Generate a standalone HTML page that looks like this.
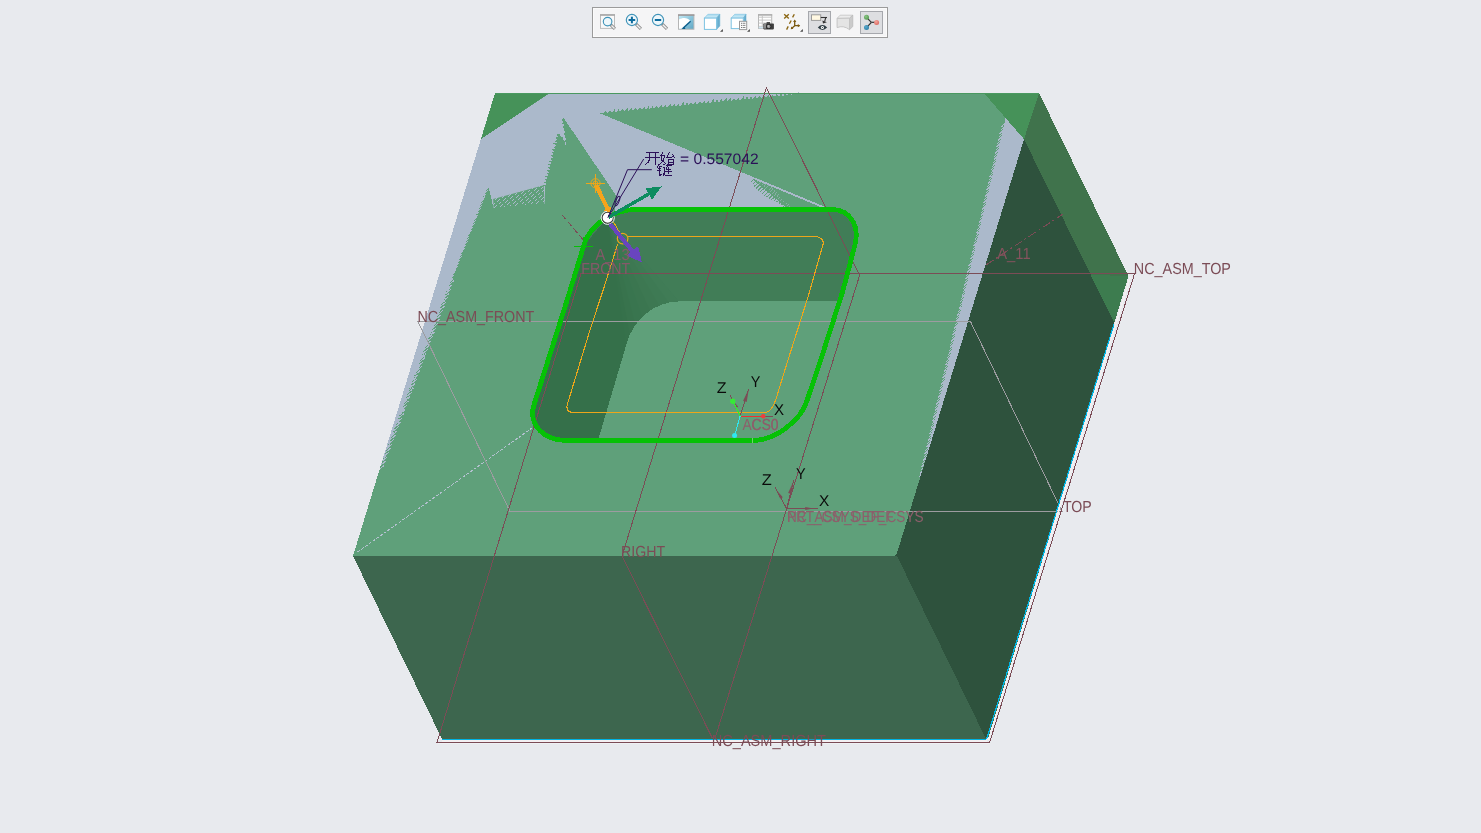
<!DOCTYPE html>
<html><head><meta charset="utf-8"><title>view</title>
<style>
html,body{margin:0;padding:0;}
body{width:1481px;height:833px;overflow:hidden;background:#e8eaee;position:relative;font-family:"Liberation Sans",sans-serif;}
.t{position:absolute;white-space:nowrap;line-height:1;will-change:transform;font-family:"Liberation Sans",sans-serif;}
#tb{position:absolute;left:592px;top:7px;width:294px;height:29px;border:1px solid #9b9b9b;background:#f4f4f5;}
.tog{position:absolute;top:3px;width:22px;height:22px;background:#d9dadc;border:1px solid #b4b5b8;box-sizing:border-box;}
</style></head><body>
<svg width="1481" height="833" viewBox="0 0 1481 833" style="position:absolute;left:0;top:0" shape-rendering="crispEdges">
<polygon points="495.0,93.0 1039.0,93.0 897.0,556.0 353.0,556.0" fill="#5fa07a"/>
<clipPath id="tf"><polygon points="495.0,93.0 1039.0,93.0 897.0,556.0 353.0,556.0"/></clipPath>
<polygon points="481.2,138.8 547.5,94.5 800.0,94.0 799.4,94.1 798.6,91.7 796.4,94.4 795.1,94.5 794.1,92.4 792.1,94.8 790.8,94.9 790.4,92.1 787.8,95.2 786.5,95.3 785.4,93.3 783.5,95.6 782.2,95.7 781.7,93.1 779.2,96.0 777.9,96.1 777.2,93.7 774.9,96.4 773.7,96.5 772.6,94.6 770.7,96.8 769.4,97.0 768.9,94.3 766.4,97.2 765.1,97.4 764.0,95.4 762.1,97.7 760.8,97.8 760.2,95.3 757.8,98.1 756.5,98.2 755.5,96.2 753.5,98.5 752.2,98.6 751.2,96.6 749.3,98.9 748.0,99.0 747.3,96.5 745.0,99.3 743.7,99.4 743.6,96.3 740.7,99.7 739.4,99.8 738.4,97.8 736.4,100.1 735.1,100.3 734.2,98.0 732.1,100.5 730.8,100.7 730.5,97.9 727.8,101.0 726.6,101.1 726.6,97.8 723.6,101.4 722.3,101.5 721.8,98.8 719.3,101.8 718.0,101.9 717.3,99.4 715.0,102.2 713.7,102.3 713.8,99.0 710.7,102.6 709.4,102.7 708.3,100.8 706.4,103.0 705.1,103.1 705.0,100.0 702.1,103.4 700.9,103.6 700.1,101.3 697.9,103.9 696.6,104.0 695.6,101.9 693.6,104.3 692.3,104.4 691.3,102.3 689.3,104.7 688.0,104.8 687.2,102.5 685.0,105.1 683.7,105.2 683.6,102.1 680.7,105.5 679.4,105.6 678.5,103.5 676.4,105.9 675.2,106.0 674.7,103.3 672.2,106.3 670.9,106.5 670.5,103.6 667.9,106.7 666.6,106.9 665.9,104.4 663.6,107.2 662.3,107.3 661.8,104.6 659.3,107.6 658.0,107.7 657.0,105.7 655.0,108.0 653.7,108.1 652.7,106.1 650.8,108.4 649.5,108.5 648.6,106.3 646.5,108.8 645.2,108.9 644.9,106.1 642.2,109.2 640.9,109.3 640.3,106.8 637.9,109.6 636.6,109.8 635.9,107.4 633.6,110.0 632.3,110.2 631.9,107.4 629.3,110.5 628.1,110.6 627.5,108.0 625.1,110.9 623.8,111.0 623.0,108.7 620.8,111.3 619.5,111.4 619.3,108.4 616.5,111.7 615.2,111.8 614.9,108.9 612.2,112.1 610.9,112.2 610.1,110.0 607.9,112.5 606.6,112.6 606.2,109.9 603.6,112.9 603.0,113.0 599.6,113.2 825.5,207.0 632.0,207.2 614.0,214.0 617.5,197.5 562.5,116.2 563.1,118.5 561.8,120.5 563.4,121.0 563.6,122.0 561.9,123.9 563.9,124.5 564.1,125.5 562.6,127.4 564.4,128.0 564.6,129.0 563.6,131.1 564.9,131.5 565.1,132.5 563.3,134.3 565.4,135.0 565.6,136.0 564.8,138.1 565.9,138.5 566.1,139.5 564.9,141.5 566.4,142.0 566.6,143.0 565.0,144.9 566.9,145.5 567.0,146.0 565.0,143.0 564.7,142.5 564.4,139.8 563.2,140.4 562.6,139.5 562.7,136.6 561.2,137.3 560.6,136.4 560.1,133.8 559.1,134.3 558.8,133.8 558.7,134.2 555.7,134.8 558.1,136.3 557.9,137.2 554.8,137.7 557.4,139.3 557.2,140.2 554.3,140.8 556.6,142.2 556.4,143.1 553.1,143.5 555.8,145.2 555.6,146.1 553.2,147.0 555.1,148.1 554.9,149.0 551.8,149.6 554.3,151.1 554.1,152.0 551.2,152.6 553.5,154.0 553.3,154.9 550.5,155.6 552.8,157.0 552.6,157.9 549.9,158.7 552.0,160.0 551.8,160.8 548.5,161.3 551.2,162.9 551.0,163.8 547.6,164.1 550.5,165.9 550.3,166.8 547.6,167.5 549.7,168.8 549.5,169.7 546.5,170.3 548.9,171.8 548.7,172.7 546.7,173.8 548.2,174.7 548.0,175.6 544.9,176.2 547.4,177.7 547.2,178.6 544.2,179.2 546.6,180.6 546.4,181.5 542.9,181.8 545.9,183.6 545.7,184.5 542.4,184.9 545.1,186.6 545.0,187.0 544.5,204.8 495.0,209.7 493.5,208.0 488.8,187.5 488.6,188.0 485.6,191.1 487.8,190.1 487.4,191.0 484.2,194.2 486.6,193.1 486.2,194.0 482.5,197.4 485.4,196.1 485.1,197.0 482.5,199.9 484.2,199.1 483.9,200.0 480.5,203.3 483.0,202.1 482.7,203.0 479.9,206.0 481.9,205.1 481.5,206.0 478.8,209.0 480.7,208.2 480.3,209.1 477.7,212.0 479.5,211.2 479.1,212.1 475.2,215.6 478.3,214.2 477.9,215.1 475.2,218.1 477.1,217.2 476.8,218.1 473.8,221.2 475.9,220.2 475.6,221.1 472.3,224.3 474.7,223.2 474.4,224.1 470.3,227.7 473.5,226.3 473.2,227.2 470.5,230.1 472.4,229.3 472.0,230.2 468.7,233.4 471.2,232.3 470.8,233.2 467.3,236.5 470.0,235.3 469.6,236.2 465.5,239.8 468.8,238.3 468.4,239.2 464.4,242.8 467.6,241.3 467.3,242.2 463.2,245.8 466.4,244.4 466.1,245.3 463.0,248.4 465.2,247.4 464.9,248.3 461.6,251.5 464.0,250.4 463.7,251.3 460.5,254.5 462.9,253.4 462.5,254.3 458.4,257.9 461.7,256.4 461.3,257.3 457.1,261.0 460.5,259.4 460.1,260.3 457.3,263.3 459.3,262.5 458.9,263.4 456.1,266.4 458.1,265.5 457.8,266.4 454.8,269.4 456.9,268.5 456.6,269.4 453.6,272.5 455.7,271.5 455.4,272.4 452.0,275.7 454.6,274.5 454.2,275.4 450.6,278.8 453.4,277.5 453.0,278.4 450.0,281.5 452.2,280.5 452.0,281.0 450.3,280.4 454.3,278.6 449.9,282.2 449.1,283.5 453.1,281.7 448.7,285.3 448.0,286.6 452.0,284.8 447.6,288.4 446.8,289.7 450.8,287.9 446.4,291.5 445.6,292.8 449.6,291.0 445.2,294.6 444.5,295.9 448.5,294.1 444.1,297.7 443.3,299.0 447.3,297.2 442.9,300.8 442.1,302.1 446.1,300.3 441.7,303.9 440.9,305.2 444.9,303.4 440.5,307.0 439.8,308.3 443.8,306.5 439.4,310.1 438.6,311.4 442.6,309.6 438.2,313.2 437.4,314.5 441.4,312.7 437.0,316.3 436.2,317.6 440.2,315.8 435.8,319.4 435.1,320.7 439.1,318.9 434.7,322.5 433.9,323.8 437.9,322.0 433.5,325.6 432.7,326.9 436.7,325.1 432.3,328.7 431.5,330.0 435.5,328.2 431.1,331.8 430.4,333.1 434.4,331.3 430.0,334.9 429.2,336.2 433.2,334.4 428.8,338.0 428.0,339.3 432.0,337.5 427.6,341.1 426.8,342.4 430.8,340.6 426.4,344.2 425.7,345.5 429.7,343.7 425.3,347.3 424.5,348.6 428.5,346.8 424.1,350.4 423.3,351.7 427.3,349.9 422.9,353.5 422.2,354.8 426.2,353.0 421.8,356.6 421.0,357.9 425.0,356.1 420.6,359.7 419.8,361.0 423.8,359.2 419.4,362.8 418.6,364.1 422.6,362.3 418.2,365.9 417.5,367.2 421.5,365.4 417.1,369.0 416.3,370.3 420.3,368.5 415.9,372.1 415.1,373.4 419.1,371.6 414.7,375.2 413.9,376.5 417.9,374.7 413.5,378.3 412.8,379.6 416.8,377.8 412.4,381.4 411.6,382.7 415.6,380.9 411.2,384.5 410.4,385.8 414.4,384.0 410.0,387.6 409.2,388.9 413.2,387.1 408.8,390.7 408.1,392.0 412.1,390.2 407.7,393.8 406.9,395.1 410.9,393.3 406.5,396.9 405.7,398.2 409.7,396.4 405.3,400.0 404.5,401.3 408.5,399.5 404.1,403.1 403.4,404.4 407.4,402.6 403.0,406.2 402.2,407.5 406.2,405.7 401.8,409.3 401.0,410.6 405.0,408.8 400.6,412.4 399.9,413.7 403.9,411.9 399.5,415.5 398.7,416.8 402.7,415.0 398.3,418.6 397.5,419.9 401.5,418.1 397.1,421.7 396.3,423.0 400.3,421.2 395.9,424.8 395.2,426.1 399.2,424.3 394.8,427.9 394.0,429.2 398.0,427.4 393.6,431.0 392.8,432.3 396.8,430.5 392.4,434.1 391.6,435.4 395.6,433.6 391.2,437.2 390.5,438.5 394.5,436.7 390.1,440.3 389.3,441.6 393.3,439.8 388.9,443.4 388.1,444.7 392.1,442.9 387.7,446.5 386.9,447.8 390.9,446.0 386.5,449.6 385.8,450.9 389.8,449.1 385.4,452.7 384.6,454.0 388.6,452.2 384.2,455.8 383.4,457.1 387.4,455.3 383.0,458.9 382.2,460.2 386.2,458.4 381.8,462.0 381.1,463.3 385.1,461.5 380.7,465.1 377.1,468.0 478.0,138.8" fill="#abb9cb"/>
<clipPath id="hb"><polygon points="493.2,199.0 543.7,185.3 544.6,204.9 495.0,209.8 493.5,208.0"/></clipPath>
<g clip-path="url(#hb)" stroke="#5fa07a" stroke-width="2.4">
<line x1="470.0" y1="214" x2="508.0" y2="184"/>
<line x1="474.6" y1="214" x2="512.6" y2="184"/>
<line x1="479.2" y1="214" x2="517.2" y2="184"/>
<line x1="483.8" y1="214" x2="521.8" y2="184"/>
<line x1="488.4" y1="214" x2="526.4" y2="184"/>
<line x1="493.0" y1="214" x2="531.0" y2="184"/>
<line x1="497.6" y1="214" x2="535.6" y2="184"/>
<line x1="502.2" y1="214" x2="540.2" y2="184"/>
<line x1="506.8" y1="214" x2="544.8" y2="184"/>
<line x1="511.4" y1="214" x2="549.4" y2="184"/>
<line x1="516.0" y1="214" x2="554.0" y2="184"/>
<line x1="520.6" y1="214" x2="558.6" y2="184"/>
<line x1="525.2" y1="214" x2="563.2" y2="184"/>
<line x1="529.8" y1="214" x2="567.8" y2="184"/>
<line x1="534.4" y1="214" x2="572.4" y2="184"/>
<line x1="539.0" y1="214" x2="577.0" y2="184"/>
<line x1="543.6" y1="214" x2="581.6" y2="184"/>
<line x1="548.2" y1="214" x2="586.2" y2="184"/>
<line x1="552.8" y1="214" x2="590.8" y2="184"/>
<line x1="557.4" y1="214" x2="595.4" y2="184"/>
</g>
<polygon points="493.5,208.0 495.0,209.8 544.6,204.9 544.3,203.0 497.0,207.5" fill="#5fa07a"/>
<polygon points="1005.3,118.0 1027.0,139.2 923.7,478.0 920.1,477.4 921.4,475.4 921.4,473.8 921.1,474.1 922.4,472.1 922.4,470.5 922.2,470.8 923.5,468.8 923.5,467.2 923.1,467.5 924.4,465.5 924.4,463.9 923.8,464.2 925.1,462.2 925.1,460.6 924.6,460.9 925.9,458.9 925.9,457.3 925.4,457.6 926.7,455.6 926.7,454.0 926.2,454.3 927.5,452.3 927.5,450.7 926.9,451.0 928.2,449.0 928.2,447.4 927.7,447.7 929.0,445.7 929.0,444.1 928.5,444.4 929.8,442.4 929.8,440.8 929.3,441.1 930.6,439.1 930.6,437.5 930.0,437.8 931.3,435.8 931.3,434.2 930.8,434.5 932.1,432.5 932.1,430.9 931.6,431.2 932.9,429.2 932.9,427.6 932.4,427.9 933.7,425.9 933.7,424.3 933.1,424.6 934.4,422.6 934.4,421.0 933.9,421.3 935.2,419.3 935.2,417.7 934.7,418.0 936.0,416.0 936.0,414.4 935.5,414.7 936.8,412.7 936.8,411.1 936.2,411.4 937.5,409.4 937.5,407.8 937.0,408.1 938.3,406.1 938.3,404.5 937.8,404.8 939.1,402.8 939.1,401.2 938.5,401.5 939.8,399.5 939.8,397.9 939.3,398.2 940.6,396.2 940.6,394.6 940.1,394.9 941.4,392.9 941.4,391.3 940.9,391.6 942.2,389.6 942.2,388.0 941.6,388.3 942.9,386.3 942.9,384.7 942.4,385.0 943.7,383.0 943.7,381.4 943.2,381.7 944.5,379.7 944.5,378.1 944.0,378.4 945.3,376.4 945.3,374.8 944.7,375.1 946.0,373.1 946.0,371.5 945.5,371.8 946.8,369.8 946.8,368.2 946.3,368.5 947.6,366.5 947.6,364.9 947.1,365.2 948.4,363.2 948.4,361.6 947.8,361.9 949.1,359.9 949.1,358.3 948.6,358.6 949.9,356.6 949.9,355.0 949.4,355.3 950.7,353.3 950.7,351.7 950.2,352.0 951.5,350.0 951.5,348.4 950.9,348.7 952.2,346.7 952.2,345.1 951.7,345.4 953.0,343.4 953.0,341.8 952.5,342.1 953.8,340.1 953.8,338.5 953.3,338.8 954.6,336.8 954.6,335.2 954.0,335.5 955.3,333.5 955.3,331.9 954.8,332.2 956.1,330.2 956.1,328.6 955.6,328.9 956.9,326.9 956.9,325.3 956.3,325.6 957.6,323.6 957.6,322.0 957.1,322.3 958.4,320.3 958.4,318.7 957.9,319.0 959.2,317.0 959.2,315.4 958.7,315.7 960.0,313.7 960.0,312.1 959.4,312.4 960.7,310.4 960.7,308.8 960.2,309.1 961.5,307.1 961.5,305.5 961.0,305.8 962.3,303.8 962.3,302.2 961.8,302.5 963.1,300.5 963.1,298.9 962.5,299.2 963.8,297.2 963.8,295.6 963.3,295.9 964.6,293.9 964.6,292.3 964.1,292.6 965.4,290.6 965.4,289.0 964.9,289.3 966.2,287.3 966.2,285.7 965.6,286.0 966.9,284.0 966.9,282.4 966.4,282.7 967.7,280.7 967.7,279.1 967.2,279.4 968.5,277.4 968.5,275.8 968.0,276.1 969.3,274.1 969.3,272.5 968.7,272.8 970.0,270.8 970.0,269.2 969.5,269.5 970.8,267.5 970.8,265.9 970.3,266.2 971.6,264.2 971.6,262.6 971.0,262.9 972.3,260.9 972.3,259.3 971.8,259.6 973.1,257.6 973.1,256.0 972.6,256.3 973.9,254.3 973.9,252.7 973.4,253.0 974.7,251.0 974.7,249.4 974.1,249.7 975.4,247.7 975.4,246.1 974.9,246.4 976.2,244.4 976.2,242.8 975.7,243.1 977.0,241.1 977.0,239.5 976.5,239.8 977.8,237.8 977.8,236.2 977.2,236.5 978.5,234.5 978.5,232.9 978.0,233.2 979.3,231.2 979.3,229.6 978.8,229.9 980.1,227.9 980.1,226.3 979.6,226.6 980.9,224.6 980.9,223.0 980.3,223.3 981.6,221.3 981.6,219.7 981.1,220.0 982.4,218.0 982.4,216.4 981.9,216.7 983.2,214.7 983.2,213.1 982.7,213.4 984.0,211.4 984.0,209.8 983.4,210.1 984.7,208.1 984.7,206.5 984.2,206.8 985.5,204.8 985.5,203.2 985.0,203.5 986.3,201.5 986.3,199.9 985.8,200.2 987.1,198.2 987.1,196.6 986.5,196.9 987.8,194.9 987.8,193.3 987.3,193.6 988.6,191.6 988.6,190.0 988.1,190.3 989.4,188.3 989.4,186.7 988.8,187.0 990.1,185.0 990.1,183.4 989.6,183.7 990.9,181.7 990.9,180.1 990.4,180.4 991.7,178.4 991.7,176.8 991.2,177.1 992.5,175.1 992.5,173.5 991.9,173.8 993.2,171.8 993.2,170.2 992.7,170.5 994.0,168.5 994.0,166.9 993.5,167.2 994.8,165.2 994.8,163.6 994.3,163.9 995.6,161.9 995.6,160.3 995.0,160.6 996.3,158.6 996.3,157.0 995.8,157.3 997.1,155.3 997.1,153.7 996.6,154.0 997.9,152.0 997.9,150.4 997.4,150.7 998.7,148.7 998.7,147.1 998.1,147.4 999.4,145.4 999.4,143.8 998.9,144.1 1000.2,142.1 1000.2,140.5 999.7,140.8 1001.0,138.8 1001.0,137.2 1000.5,137.5 1001.8,135.5 1001.8,133.9 1001.2,134.2 1002.5,132.2 1002.5,130.6 1002.0,130.9 1003.3,128.9 1003.3,127.3 1002.8,127.6 1004.1,125.6 1004.1,124.0 1003.6,124.3 1004.9,122.3 1004.9,120.7" fill="#abb9cb"/>
<line x1="922.7" y1="472.8" x2="918.9" y2="477.0" stroke="#abb9cb" stroke-width="1"/>
<line x1="923.7" y1="469.5" x2="919.9" y2="473.7" stroke="#abb9cb" stroke-width="1"/>
<line x1="924.7" y1="466.2" x2="920.9" y2="470.4" stroke="#abb9cb" stroke-width="1"/>
<line x1="925.4" y1="462.9" x2="921.6" y2="467.1" stroke="#abb9cb" stroke-width="1"/>
<line x1="926.2" y1="459.6" x2="922.4" y2="463.8" stroke="#abb9cb" stroke-width="1"/>
<line x1="927.0" y1="456.3" x2="923.2" y2="460.5" stroke="#abb9cb" stroke-width="1"/>
<line x1="927.8" y1="453.0" x2="924.0" y2="457.2" stroke="#abb9cb" stroke-width="1"/>
<line x1="928.5" y1="449.7" x2="924.7" y2="453.9" stroke="#abb9cb" stroke-width="1"/>
<line x1="929.3" y1="446.4" x2="925.5" y2="450.6" stroke="#abb9cb" stroke-width="1"/>
<line x1="930.1" y1="443.1" x2="926.3" y2="447.3" stroke="#abb9cb" stroke-width="1"/>
<line x1="930.9" y1="439.8" x2="927.1" y2="444.0" stroke="#abb9cb" stroke-width="1"/>
<line x1="931.6" y1="436.5" x2="927.8" y2="440.7" stroke="#abb9cb" stroke-width="1"/>
<line x1="932.4" y1="433.2" x2="928.6" y2="437.4" stroke="#abb9cb" stroke-width="1"/>
<line x1="933.2" y1="429.9" x2="929.4" y2="434.1" stroke="#abb9cb" stroke-width="1"/>
<line x1="934.0" y1="426.6" x2="930.2" y2="430.8" stroke="#abb9cb" stroke-width="1"/>
<line x1="934.7" y1="423.3" x2="930.9" y2="427.5" stroke="#abb9cb" stroke-width="1"/>
<line x1="935.5" y1="420.0" x2="931.7" y2="424.2" stroke="#abb9cb" stroke-width="1"/>
<line x1="936.3" y1="416.7" x2="932.5" y2="420.9" stroke="#abb9cb" stroke-width="1"/>
<line x1="937.0" y1="413.4" x2="933.2" y2="417.6" stroke="#abb9cb" stroke-width="1"/>
<line x1="937.8" y1="410.1" x2="934.0" y2="414.3" stroke="#abb9cb" stroke-width="1"/>
<line x1="938.6" y1="406.8" x2="934.8" y2="411.0" stroke="#abb9cb" stroke-width="1"/>
<line x1="939.4" y1="403.5" x2="935.6" y2="407.7" stroke="#abb9cb" stroke-width="1"/>
<line x1="940.1" y1="400.2" x2="936.3" y2="404.4" stroke="#abb9cb" stroke-width="1"/>
<line x1="940.9" y1="396.9" x2="937.1" y2="401.1" stroke="#abb9cb" stroke-width="1"/>
<line x1="941.7" y1="393.6" x2="937.9" y2="397.8" stroke="#abb9cb" stroke-width="1"/>
<line x1="942.5" y1="390.3" x2="938.7" y2="394.5" stroke="#abb9cb" stroke-width="1"/>
<line x1="943.2" y1="387.0" x2="939.4" y2="391.2" stroke="#abb9cb" stroke-width="1"/>
<line x1="944.0" y1="383.7" x2="940.2" y2="387.9" stroke="#abb9cb" stroke-width="1"/>
<line x1="944.8" y1="380.4" x2="941.0" y2="384.6" stroke="#abb9cb" stroke-width="1"/>
<line x1="945.6" y1="377.1" x2="941.8" y2="381.3" stroke="#abb9cb" stroke-width="1"/>
<line x1="946.3" y1="373.8" x2="942.5" y2="378.0" stroke="#abb9cb" stroke-width="1"/>
<line x1="947.1" y1="370.5" x2="943.3" y2="374.7" stroke="#abb9cb" stroke-width="1"/>
<line x1="947.9" y1="367.2" x2="944.1" y2="371.4" stroke="#abb9cb" stroke-width="1"/>
<line x1="948.7" y1="363.9" x2="944.9" y2="368.1" stroke="#abb9cb" stroke-width="1"/>
<line x1="949.4" y1="360.6" x2="945.6" y2="364.8" stroke="#abb9cb" stroke-width="1"/>
<line x1="950.2" y1="357.3" x2="946.4" y2="361.5" stroke="#abb9cb" stroke-width="1"/>
<line x1="951.0" y1="354.0" x2="947.2" y2="358.2" stroke="#abb9cb" stroke-width="1"/>
<line x1="951.8" y1="350.7" x2="948.0" y2="354.9" stroke="#abb9cb" stroke-width="1"/>
<line x1="952.5" y1="347.4" x2="948.7" y2="351.6" stroke="#abb9cb" stroke-width="1"/>
<line x1="953.3" y1="344.1" x2="949.5" y2="348.3" stroke="#abb9cb" stroke-width="1"/>
<line x1="954.1" y1="340.8" x2="950.3" y2="345.0" stroke="#abb9cb" stroke-width="1"/>
<line x1="954.8" y1="337.5" x2="951.0" y2="341.7" stroke="#abb9cb" stroke-width="1"/>
<line x1="955.6" y1="334.2" x2="951.8" y2="338.4" stroke="#abb9cb" stroke-width="1"/>
<line x1="956.4" y1="330.9" x2="952.6" y2="335.1" stroke="#abb9cb" stroke-width="1"/>
<line x1="957.2" y1="327.6" x2="953.4" y2="331.8" stroke="#abb9cb" stroke-width="1"/>
<line x1="957.9" y1="324.3" x2="954.1" y2="328.5" stroke="#abb9cb" stroke-width="1"/>
<line x1="958.7" y1="321.0" x2="954.9" y2="325.2" stroke="#abb9cb" stroke-width="1"/>
<line x1="959.5" y1="317.7" x2="955.7" y2="321.9" stroke="#abb9cb" stroke-width="1"/>
<line x1="960.3" y1="314.4" x2="956.5" y2="318.6" stroke="#abb9cb" stroke-width="1"/>
<line x1="961.0" y1="311.1" x2="957.2" y2="315.3" stroke="#abb9cb" stroke-width="1"/>
<line x1="961.8" y1="307.8" x2="958.0" y2="312.0" stroke="#abb9cb" stroke-width="1"/>
<line x1="962.6" y1="304.5" x2="958.8" y2="308.7" stroke="#abb9cb" stroke-width="1"/>
<line x1="963.4" y1="301.2" x2="959.6" y2="305.4" stroke="#abb9cb" stroke-width="1"/>
<line x1="964.1" y1="297.9" x2="960.3" y2="302.1" stroke="#abb9cb" stroke-width="1"/>
<line x1="964.9" y1="294.6" x2="961.1" y2="298.8" stroke="#abb9cb" stroke-width="1"/>
<line x1="965.7" y1="291.3" x2="961.9" y2="295.5" stroke="#abb9cb" stroke-width="1"/>
<line x1="966.5" y1="288.0" x2="962.7" y2="292.2" stroke="#abb9cb" stroke-width="1"/>
<line x1="967.2" y1="284.7" x2="963.4" y2="288.9" stroke="#abb9cb" stroke-width="1"/>
<line x1="968.0" y1="281.4" x2="964.2" y2="285.6" stroke="#abb9cb" stroke-width="1"/>
<line x1="968.8" y1="278.1" x2="965.0" y2="282.3" stroke="#abb9cb" stroke-width="1"/>
<line x1="969.5" y1="274.8" x2="965.7" y2="279.0" stroke="#abb9cb" stroke-width="1"/>
<line x1="970.3" y1="271.5" x2="966.5" y2="275.7" stroke="#abb9cb" stroke-width="1"/>
<line x1="971.1" y1="268.2" x2="967.3" y2="272.4" stroke="#abb9cb" stroke-width="1"/>
<line x1="971.9" y1="264.9" x2="968.1" y2="269.1" stroke="#abb9cb" stroke-width="1"/>
<line x1="972.6" y1="261.6" x2="968.8" y2="265.8" stroke="#abb9cb" stroke-width="1"/>
<line x1="973.4" y1="258.3" x2="969.6" y2="262.5" stroke="#abb9cb" stroke-width="1"/>
<line x1="974.2" y1="255.0" x2="970.4" y2="259.2" stroke="#abb9cb" stroke-width="1"/>
<line x1="975.0" y1="251.7" x2="971.2" y2="255.9" stroke="#abb9cb" stroke-width="1"/>
<line x1="975.7" y1="248.4" x2="971.9" y2="252.6" stroke="#abb9cb" stroke-width="1"/>
<line x1="976.5" y1="245.1" x2="972.7" y2="249.3" stroke="#abb9cb" stroke-width="1"/>
<line x1="977.3" y1="241.8" x2="973.5" y2="246.0" stroke="#abb9cb" stroke-width="1"/>
<line x1="978.1" y1="238.5" x2="974.3" y2="242.7" stroke="#abb9cb" stroke-width="1"/>
<line x1="978.8" y1="235.2" x2="975.0" y2="239.4" stroke="#abb9cb" stroke-width="1"/>
<line x1="979.6" y1="231.9" x2="975.8" y2="236.1" stroke="#abb9cb" stroke-width="1"/>
<line x1="980.4" y1="228.6" x2="976.6" y2="232.8" stroke="#abb9cb" stroke-width="1"/>
<line x1="981.2" y1="225.3" x2="977.4" y2="229.5" stroke="#abb9cb" stroke-width="1"/>
<line x1="981.9" y1="222.0" x2="978.1" y2="226.2" stroke="#abb9cb" stroke-width="1"/>
<line x1="982.7" y1="218.7" x2="978.9" y2="222.9" stroke="#abb9cb" stroke-width="1"/>
<line x1="983.5" y1="215.4" x2="979.7" y2="219.6" stroke="#abb9cb" stroke-width="1"/>
<line x1="984.3" y1="212.1" x2="980.5" y2="216.3" stroke="#abb9cb" stroke-width="1"/>
<line x1="985.0" y1="208.8" x2="981.2" y2="213.0" stroke="#abb9cb" stroke-width="1"/>
<line x1="985.8" y1="205.5" x2="982.0" y2="209.7" stroke="#abb9cb" stroke-width="1"/>
<line x1="986.6" y1="202.2" x2="982.8" y2="206.4" stroke="#abb9cb" stroke-width="1"/>
<line x1="987.3" y1="198.9" x2="983.5" y2="203.1" stroke="#abb9cb" stroke-width="1"/>
<line x1="988.1" y1="195.6" x2="984.3" y2="199.8" stroke="#abb9cb" stroke-width="1"/>
<line x1="988.9" y1="192.3" x2="985.1" y2="196.5" stroke="#abb9cb" stroke-width="1"/>
<line x1="989.7" y1="189.0" x2="985.9" y2="193.2" stroke="#abb9cb" stroke-width="1"/>
<line x1="990.4" y1="185.7" x2="986.6" y2="189.9" stroke="#abb9cb" stroke-width="1"/>
<line x1="991.2" y1="182.4" x2="987.4" y2="186.6" stroke="#abb9cb" stroke-width="1"/>
<line x1="992.0" y1="179.1" x2="988.2" y2="183.3" stroke="#abb9cb" stroke-width="1"/>
<line x1="992.8" y1="175.8" x2="989.0" y2="180.0" stroke="#abb9cb" stroke-width="1"/>
<line x1="993.5" y1="172.5" x2="989.7" y2="176.7" stroke="#abb9cb" stroke-width="1"/>
<line x1="994.3" y1="169.2" x2="990.5" y2="173.4" stroke="#abb9cb" stroke-width="1"/>
<line x1="995.1" y1="165.9" x2="991.3" y2="170.1" stroke="#abb9cb" stroke-width="1"/>
<line x1="995.9" y1="162.6" x2="992.1" y2="166.8" stroke="#abb9cb" stroke-width="1"/>
<line x1="996.6" y1="159.3" x2="992.8" y2="163.5" stroke="#abb9cb" stroke-width="1"/>
<line x1="997.4" y1="156.0" x2="993.6" y2="160.2" stroke="#abb9cb" stroke-width="1"/>
<line x1="998.2" y1="152.7" x2="994.4" y2="156.9" stroke="#abb9cb" stroke-width="1"/>
<line x1="999.0" y1="149.4" x2="995.2" y2="153.6" stroke="#abb9cb" stroke-width="1"/>
<line x1="999.7" y1="146.1" x2="995.9" y2="150.3" stroke="#abb9cb" stroke-width="1"/>
<line x1="1000.5" y1="142.8" x2="996.7" y2="147.0" stroke="#abb9cb" stroke-width="1"/>
<line x1="1001.3" y1="139.5" x2="997.5" y2="143.7" stroke="#abb9cb" stroke-width="1"/>
<line x1="1002.1" y1="136.2" x2="998.3" y2="140.4" stroke="#abb9cb" stroke-width="1"/>
<line x1="1002.8" y1="132.9" x2="999.0" y2="137.1" stroke="#abb9cb" stroke-width="1"/>
<line x1="1003.6" y1="129.6" x2="999.8" y2="133.8" stroke="#abb9cb" stroke-width="1"/>
<line x1="1004.4" y1="126.3" x2="1000.6" y2="130.5" stroke="#abb9cb" stroke-width="1"/>
<line x1="1005.1" y1="123.0" x2="1001.3" y2="127.2" stroke="#abb9cb" stroke-width="1"/>
<line x1="449.0" y1="284.8" x2="454.2" y2="280.4" stroke="#abb9cb" stroke-width="1"/>
<line x1="447.3" y1="289.1" x2="452.5" y2="284.7" stroke="#abb9cb" stroke-width="1"/>
<line x1="445.7" y1="293.4" x2="450.9" y2="289.0" stroke="#abb9cb" stroke-width="1"/>
<line x1="444.1" y1="297.7" x2="449.3" y2="293.3" stroke="#abb9cb" stroke-width="1"/>
<line x1="442.4" y1="302.0" x2="447.6" y2="297.6" stroke="#abb9cb" stroke-width="1"/>
<line x1="440.8" y1="306.3" x2="446.0" y2="301.9" stroke="#abb9cb" stroke-width="1"/>
<line x1="439.2" y1="310.6" x2="444.4" y2="306.2" stroke="#abb9cb" stroke-width="1"/>
<line x1="437.6" y1="314.9" x2="442.8" y2="310.5" stroke="#abb9cb" stroke-width="1"/>
<line x1="435.9" y1="319.2" x2="441.1" y2="314.8" stroke="#abb9cb" stroke-width="1"/>
<line x1="434.3" y1="323.5" x2="439.5" y2="319.1" stroke="#abb9cb" stroke-width="1"/>
<line x1="432.7" y1="327.8" x2="437.9" y2="323.4" stroke="#abb9cb" stroke-width="1"/>
<line x1="431.1" y1="332.1" x2="436.3" y2="327.7" stroke="#abb9cb" stroke-width="1"/>
<line x1="429.4" y1="336.4" x2="434.6" y2="332.0" stroke="#abb9cb" stroke-width="1"/>
<line x1="427.8" y1="340.7" x2="433.0" y2="336.3" stroke="#abb9cb" stroke-width="1"/>
<line x1="426.2" y1="345.0" x2="431.4" y2="340.6" stroke="#abb9cb" stroke-width="1"/>
<line x1="424.5" y1="349.3" x2="429.7" y2="344.9" stroke="#abb9cb" stroke-width="1"/>
<line x1="422.9" y1="353.6" x2="428.1" y2="349.2" stroke="#abb9cb" stroke-width="1"/>
<line x1="421.3" y1="357.9" x2="426.5" y2="353.5" stroke="#abb9cb" stroke-width="1"/>
<line x1="419.7" y1="362.2" x2="424.9" y2="357.8" stroke="#abb9cb" stroke-width="1"/>
<line x1="418.0" y1="366.5" x2="423.2" y2="362.1" stroke="#abb9cb" stroke-width="1"/>
<line x1="416.4" y1="370.8" x2="421.6" y2="366.4" stroke="#abb9cb" stroke-width="1"/>
<line x1="414.8" y1="375.1" x2="420.0" y2="370.7" stroke="#abb9cb" stroke-width="1"/>
<line x1="413.1" y1="379.4" x2="418.3" y2="375.0" stroke="#abb9cb" stroke-width="1"/>
<line x1="411.5" y1="383.7" x2="416.7" y2="379.3" stroke="#abb9cb" stroke-width="1"/>
<line x1="409.9" y1="388.0" x2="415.1" y2="383.6" stroke="#abb9cb" stroke-width="1"/>
<line x1="408.3" y1="392.3" x2="413.5" y2="387.9" stroke="#abb9cb" stroke-width="1"/>
<line x1="406.6" y1="396.6" x2="411.8" y2="392.2" stroke="#abb9cb" stroke-width="1"/>
<line x1="405.0" y1="400.9" x2="410.2" y2="396.5" stroke="#abb9cb" stroke-width="1"/>
<line x1="403.4" y1="405.2" x2="408.6" y2="400.8" stroke="#abb9cb" stroke-width="1"/>
<line x1="401.8" y1="409.5" x2="407.0" y2="405.1" stroke="#abb9cb" stroke-width="1"/>
<line x1="400.1" y1="413.8" x2="405.3" y2="409.4" stroke="#abb9cb" stroke-width="1"/>
<line x1="398.5" y1="418.1" x2="403.7" y2="413.7" stroke="#abb9cb" stroke-width="1"/>
<line x1="396.9" y1="422.4" x2="402.1" y2="418.0" stroke="#abb9cb" stroke-width="1"/>
<line x1="395.2" y1="426.7" x2="400.4" y2="422.3" stroke="#abb9cb" stroke-width="1"/>
<line x1="393.6" y1="431.0" x2="398.8" y2="426.6" stroke="#abb9cb" stroke-width="1"/>
<line x1="392.0" y1="435.3" x2="397.2" y2="430.9" stroke="#abb9cb" stroke-width="1"/>
<line x1="390.4" y1="439.6" x2="395.6" y2="435.2" stroke="#abb9cb" stroke-width="1"/>
<line x1="388.7" y1="443.9" x2="393.9" y2="439.5" stroke="#abb9cb" stroke-width="1"/>
<line x1="387.1" y1="448.2" x2="392.3" y2="443.8" stroke="#abb9cb" stroke-width="1"/>
<line x1="385.5" y1="452.5" x2="390.7" y2="448.1" stroke="#abb9cb" stroke-width="1"/>
<line x1="383.8" y1="456.8" x2="389.0" y2="452.4" stroke="#abb9cb" stroke-width="1"/>
<line x1="382.2" y1="461.1" x2="387.4" y2="456.7" stroke="#abb9cb" stroke-width="1"/>
<line x1="380.6" y1="465.4" x2="385.8" y2="461.0" stroke="#abb9cb" stroke-width="1"/>
<line x1="379.0" y1="469.7" x2="384.2" y2="465.3" stroke="#abb9cb" stroke-width="1"/>
<polygon points="495.0,93.0 548.0,94.0 481.2,139.0" fill="#469259"/>
<polygon points="984.3,93.5 1039.0,93.0 1024.0,139.2" fill="#469259"/>
<rect x="495" y="93" width="544" height="1" fill="#4a9960"/>
<polygon points="751.0,178.0 823.0,208.0 823.0,209.0 788.0,209.0" fill="#5fa07a"/>
<line x1="754.0" y1="179.3" x2="750.8" y2="182.0" stroke="#5fa07a" stroke-width="1"/>
<line x1="755.2" y1="180.2" x2="757.0" y2="178.0" stroke="#abb9cb" stroke-width="0.9" opacity="0.6"/>
<line x1="756.1" y1="181.0" x2="752.4" y2="184.3" stroke="#5fa07a" stroke-width="1"/>
<line x1="757.3" y1="181.9" x2="759.5" y2="179.2" stroke="#abb9cb" stroke-width="0.9" opacity="0.6"/>
<line x1="758.2" y1="182.7" x2="754.1" y2="186.5" stroke="#5fa07a" stroke-width="1"/>
<line x1="759.5" y1="183.6" x2="762.0" y2="180.4" stroke="#abb9cb" stroke-width="0.9" opacity="0.6"/>
<line x1="760.4" y1="184.4" x2="755.9" y2="188.6" stroke="#5fa07a" stroke-width="1"/>
<line x1="761.6" y1="185.3" x2="764.4" y2="181.8" stroke="#abb9cb" stroke-width="0.9" opacity="0.6"/>
<line x1="762.5" y1="186.1" x2="757.7" y2="190.6" stroke="#5fa07a" stroke-width="1"/>
<line x1="763.7" y1="187.0" x2="766.7" y2="183.2" stroke="#abb9cb" stroke-width="0.9" opacity="0.6"/>
<line x1="764.6" y1="187.8" x2="759.7" y2="192.5" stroke="#5fa07a" stroke-width="1"/>
<line x1="765.8" y1="188.7" x2="768.9" y2="184.8" stroke="#abb9cb" stroke-width="0.9" opacity="0.6"/>
<line x1="766.8" y1="189.5" x2="761.9" y2="194.2" stroke="#5fa07a" stroke-width="1"/>
<line x1="768.0" y1="190.4" x2="771.1" y2="186.5" stroke="#abb9cb" stroke-width="0.9" opacity="0.6"/>
<line x1="768.9" y1="191.2" x2="764.1" y2="195.7" stroke="#5fa07a" stroke-width="1"/>
<line x1="770.1" y1="192.1" x2="773.1" y2="188.3" stroke="#abb9cb" stroke-width="0.9" opacity="0.6"/>
<line x1="771.0" y1="192.9" x2="766.5" y2="197.2" stroke="#5fa07a" stroke-width="1"/>
<line x1="772.2" y1="193.8" x2="775.0" y2="190.3" stroke="#abb9cb" stroke-width="0.9" opacity="0.6"/>
<line x1="773.1" y1="194.6" x2="768.9" y2="198.5" stroke="#5fa07a" stroke-width="1"/>
<line x1="774.3" y1="195.5" x2="776.9" y2="192.3" stroke="#abb9cb" stroke-width="0.9" opacity="0.6"/>
<line x1="775.2" y1="196.3" x2="771.5" y2="199.7" stroke="#5fa07a" stroke-width="1"/>
<line x1="776.5" y1="197.2" x2="778.7" y2="194.4" stroke="#abb9cb" stroke-width="0.9" opacity="0.6"/>
<line x1="777.4" y1="198.0" x2="774.1" y2="200.8" stroke="#5fa07a" stroke-width="1"/>
<line x1="778.6" y1="198.9" x2="780.4" y2="196.6" stroke="#abb9cb" stroke-width="0.9" opacity="0.6"/>
<line x1="779.5" y1="199.7" x2="776.7" y2="201.8" stroke="#5fa07a" stroke-width="1"/>
<line x1="780.7" y1="200.6" x2="782.1" y2="198.8" stroke="#abb9cb" stroke-width="0.9" opacity="0.6"/>
<line x1="781.6" y1="201.4" x2="779.1" y2="203.2" stroke="#5fa07a" stroke-width="1"/>
<line x1="782.8" y1="202.3" x2="784.0" y2="200.8" stroke="#abb9cb" stroke-width="0.9" opacity="0.6"/>
<line x1="783.8" y1="203.1" x2="781.2" y2="204.9" stroke="#5fa07a" stroke-width="1"/>
<line x1="785.0" y1="204.0" x2="786.2" y2="202.5" stroke="#abb9cb" stroke-width="0.9" opacity="0.6"/>
<line x1="785.9" y1="204.8" x2="783.4" y2="206.6" stroke="#5fa07a" stroke-width="1"/>
<line x1="787.1" y1="205.7" x2="788.3" y2="204.2" stroke="#abb9cb" stroke-width="0.9" opacity="0.6"/>
<line x1="788.0" y1="206.5" x2="785.5" y2="208.3" stroke="#5fa07a" stroke-width="1"/>
<line x1="789.2" y1="207.4" x2="790.4" y2="205.9" stroke="#abb9cb" stroke-width="0.9" opacity="0.6"/>
<polygon points="495.0,93.0 353.0,556.0 330.0,556.0 330.0,80.0 495.0,80.0" fill="#e8eaee"/>
<polygon points="1039.0,93.0 1128.5,276.0 988.0,739.0 897.0,556.0 1024.0,139.2" fill="#40734c"/>
<polygon points="1024.0,139.2 1114.0,322.0 986.5,739.0 984.0,739.0 895.0,556.0 897.0,553.0" fill="#2e523d"/>
<polygon points="1090.5,275.0 1128.5,276.0 1114.0,322.0" fill="#3d7c4f"/>
<polygon points="353.0,556.0 897.0,556.0 986.0,739.0 442.0,739.0" fill="#3d664e"/>
<path d="M636,209.5 L832,209.5 C849.8,209.5 860,225.5 854.8,245.4 Q848.5,270 842.5,292 L820.7,360 L806.9,400.8 C801,420 776,440.4 752.8,440.4 L566,440.4 C545,440.4 528.5,426 533.6,406 L568.7,295 L583.6,246 C589,229 599,222 607.5,217.5 C617,212 626,209.5 636,209.5 Z" fill="#417d57"/>
<path d="M607.5,217.5 L583.6,246 L568.7,295 L533.6,406 C528.5,426 545,440.4 566,440.4 L598,440.4 L626.5,344 L628,339 Z" fill="#35704a"/>
<polygon points="607.5,217.5 626.5,344.0 630.2,333.8" fill="#36714b" stroke="#36714b" stroke-width="0.6"/>
<polygon points="607.5,217.5 630.2,333.8 635.6,324.6" fill="#38734d" stroke="#38734d" stroke-width="0.6"/>
<polygon points="607.5,217.5 635.6,324.6 642.5,316.7" fill="#39754f" stroke="#39754f" stroke-width="0.6"/>
<polygon points="607.5,217.5 642.5,316.7 650.5,310.3" fill="#3b7650" stroke="#3b7650" stroke-width="0.6"/>
<polygon points="607.5,217.5 650.5,310.3 659.5,305.5" fill="#3d7852" stroke="#3d7852" stroke-width="0.6"/>
<polygon points="607.5,217.5 659.5,305.5 669.0,302.4" fill="#3e7a54" stroke="#3e7a54" stroke-width="0.6"/>
<polygon points="607.5,217.5 669.0,302.4 679.0,301.4" fill="#407c56" stroke="#407c56" stroke-width="0.6"/>
<path d="M679,301.4 L840,301.4 L820.7,360 L806.9,400.8 C801,420 776,440.4 752.8,440.4 L598,440.4 L626.5,344 C633,319 655.5,301.4 679,301.4 Z" fill="#5fa07a"/>
<line x1="357.6" y1="552" x2="535" y2="425.9" stroke="#b3c1cf" stroke-width="1" stroke-dasharray="3 1.6"/>
<polygon points="418.0,321.5 970.5,321.5 1062.0,511.5 510.0,511.5" fill="none" stroke="#9c9ca0" stroke-width="1" />
<polygon points="581.0,273.5 1134.6,273.5 989.6,742.5 437.0,742.5" fill="none" stroke="#7b4c56" stroke-width="1" />
<polygon points="766.4,87.6 859.6,275.4 714.0,741.5 622.0,556.0" fill="none" stroke="#7b4c56" stroke-width="1" />
<line x1="986" y1="265" x2="1063" y2="214" stroke="#7b4c56" stroke-width="1" stroke-dasharray="9 3 2 3"/>
<line x1="561.8" y1="214.7" x2="583.4" y2="240" stroke="#7b4c56" stroke-width="1" stroke-dasharray="6 3"/>
<line x1="442" y1="739.5" x2="986" y2="739.5" stroke="#00b4e4" stroke-width="1"/>
<line x1="986.5" y1="739.5" x2="1114" y2="324" stroke="#00b4e4" stroke-width="1.2"/>
<line x1="442" y1="740.8" x2="987" y2="740.8" stroke="#f4f0f2" stroke-width="1.6"/>
<line x1="988.4" y1="740" x2="1130.6" y2="276" stroke="#f4f0f2" stroke-width="1.6"/>
<rect x="438" y="743" width="552" height="1" fill="#eff1f4"/>
<rect x="442" y="738" width="544" height="1" fill="#45664a"/>
<path d="M636,209.5 L832,209.5 C849.8,209.5 860,225.5 854.8,245.4 Q848.5,270 842.5,292 L820.7,360 L806.9,400.8 C801,420 776,440.4 752.8,440.4 L566,440.4 C545,440.4 528.5,426 533.6,406 L568.7,295 L583.6,246 C589,229 599,222 607.5,217.5 C617,212 626,209.5 636,209.5 Z" fill="none" stroke="#06c106" stroke-width="4.8" stroke-linejoin="round"/>
<rect x="752" y="438" width="1" height="5" fill="#6fd06f"/>
<line x1="574.4" y1="246.5" x2="593.3" y2="246.5" stroke="#06c106" stroke-width="1"/>
<line x1="583.5" y1="237" x2="583.5" y2="246.5" stroke="#06c106" stroke-width="1"/>
<path d="M628.4,236.6 L817,236.6 Q821.5,237.5 823.6,242.4 L808.6,295 L788,360 L778,392.4 C775.5,402 772,412.5 764.8,412.5 L573.6,412.5 C567,412.5 566,408 567.6,403.5 L590,330 L603.2,290 L617.6,244.4" fill="none" stroke="#eda61a" stroke-width="1.1"/>
<circle cx="622.6" cy="238.6" r="5.3" fill="none" stroke="#eda61a" stroke-width="1.2" shape-rendering="auto"/>
<line x1="613.5" y1="222" x2="620.5" y2="234" stroke="#eda61a" stroke-width="1"/>
<circle cx="607.7" cy="217.8" r="5.6" fill="#ffffff" stroke="#3c3c3c" stroke-width="1.1" shape-rendering="auto"/>
<circle cx="607.7" cy="217.8" r="6.6" fill="none" stroke="#f2f2f2" stroke-width="1" shape-rendering="auto"/>
<polygon points="594.1,185.9 605.6,209.4 603.5,210.4 609.5,212.5 611.6,206.5 609.4,207.5 597.9,184.1" fill="#f5a41c"/>
<g stroke="#eda61a" stroke-width="1" fill="none" shape-rendering="auto"><circle cx="595.5" cy="183.3" r="4.6"/><circle cx="595.5" cy="183.3" r="2.3"/><line x1="586" y1="183.5" x2="605" y2="183.5"/><line x1="595.5" y1="174" x2="595.5" y2="193"/></g>
<polygon points="609.4,218.8 649.6,195.4 652.0,199.6 661.7,186.4 645.5,188.3 647.9,192.5 607.6,215.8" fill="#0d8c60"/>
<polygon points="608.4,225.3 630.7,252.2 626.5,255.7 641.9,262.4 638.1,246.1 633.9,249.5 611.6,222.7" fill="#6945bf"/>
<g stroke="#2b1058" stroke-width="1" fill="none" shape-rendering="auto"><polyline points="608,217.5 627.5,169.7 651.8,169.7"/><line x1="608" y1="217.5" x2="643.7" y2="159"/><ellipse cx="617.5" cy="201" rx="1.6" ry="5" transform="rotate(22 617.5 201)"/></g>
<line x1="740.2" y1="416.5" x2="772.6" y2="416.5" stroke="#7b4c56" stroke-width="1"/>
<line x1="740.2" y1="416.5" x2="763" y2="416.5" stroke="#f03030" stroke-width="1.2"/>
<circle cx="763.2" cy="416.3" r="2.2" fill="#f03c3c" shape-rendering="auto"/>
<line x1="740.2" y1="415.8" x2="748.6" y2="389.2" stroke="#7b4c56" stroke-width="1"/>
<polygon points="748.8,389.0 746.7,401.9 743.1,400.7" fill="#7b4c56" shape-rendering="auto"/>
<line x1="740.2" y1="415.8" x2="730" y2="395.2" stroke="#7b4c56" stroke-width="1"/>
<polygon points="732.6,400.2 738.2,406.8 735.6,408.4" fill="#7b4c56" shape-rendering="auto"/>
<line x1="740.2" y1="415.8" x2="732.8" y2="401.2" stroke="#35e635" stroke-width="1"/>
<circle cx="732.8" cy="401.2" r="2.7" fill="#38e838" shape-rendering="auto"/>
<line x1="740.2" y1="415.8" x2="734.6" y2="435.6" stroke="#2ee8f0" stroke-width="1"/>
<circle cx="734.6" cy="435.6" r="2.5" fill="#2ee8f0" shape-rendering="auto"/>
<line x1="786.6" y1="508.5" x2="817.6" y2="508.5" stroke="#7b4c56" stroke-width="1"/>
<polygon points="813.2,508.5 805.2,510.0 805.2,507.0" fill="#7b4c56" shape-rendering="auto"/>
<line x1="786.6" y1="508.5" x2="775" y2="487.2" stroke="#7b4c56" stroke-width="1"/>
<polygon points="776.2,489.8 782.8,497.2 780.2,498.8" fill="#7b4c56" shape-rendering="auto"/>
<line x1="786.6" y1="508.5" x2="793.6" y2="480.5" stroke="#7b4c56" stroke-width="1"/>
<polygon points="793.1,482.3 791.5,494.1 788.1,493.1" fill="#7b4c56" shape-rendering="auto"/>
<g fill="none" stroke="#2b1058" stroke-width="1" shape-rendering="crispEdges">
<polyline points="645.92,152.08 658.98,152.08"/>
<polyline points="645.10,157.39 659.80,157.39"/>
<polyline points="655.31,152.08 655.31,164.53"/>
<polyline points="649.39,152.08 649.39,159.84 648.16,162.29 645.31,164.53"/>
<polyline points="662.24,152.08 661.22,160.24 663.27,161.47 666.12,164.33"/>
<polyline points="660.20,155.55 665.31,155.55"/>
<polyline points="664.49,155.55 663.47,160.24 659.59,164.33"/>
<polyline points="669.39,152.08 666.53,157.59 673.88,156.78"/>
<polyline points="672.45,154.12 674.69,157.80"/>
<polyline points="668.16,159.84 673.88,159.84 673.88,164.73 668.16,164.73 668.16,159.84"/>
<polyline points="668.16,162.29 673.88,162.29"/>
<polyline points="659.39,163.71 657.35,167.59"/>
<polyline points="658.57,166.16 661.63,166.16"/>
<polyline points="657.35,170.24 661.22,170.24"/>
<polyline points="659.39,166.16 659.39,175.76 661.63,174.12"/>
<polyline points="657.55,168.41 661.02,168.41"/>
<polyline points="666.12,165.55 671.84,165.55"/>
<polyline points="668.16,163.71 666.33,169.22 671.43,169.22"/>
<polyline points="668.57,167.18 668.57,174.12"/>
<polyline points="665.31,171.88 672.24,171.88"/>
<polyline points="663.67,164.12 664.49,165.14"/>
<polyline points="662.65,167.18 664.49,167.18 664.08,173.31 662.86,176.16"/>
<polyline points="664.08,174.12 666.12,175.76 672.24,175.76"/>
</g>
</svg>
<svg width="1481" height="50" viewBox="0 0 1481 50" style="position:absolute;left:0;top:0">
<defs><linearGradient id="gRp" x1="0" y1="0" x2="1" y2="1"><stop offset="0" stop-color="#c9edf7"/><stop offset="0.5" stop-color="#8cc6dc"/><stop offset="1" stop-color="#5ea6c4"/></linearGradient><linearGradient id="gTop" x1="0" y1="0" x2="0" y2="1"><stop offset="0" stop-color="#a9daee"/><stop offset="1" stop-color="#d3eef8"/></linearGradient><linearGradient id="gSide" x1="0" y1="0" x2="1" y2="0"><stop offset="0" stop-color="#7fbcd8"/><stop offset="1" stop-color="#5aa5c9"/></linearGradient><radialGradient id="gG" cx="0.4" cy="0.35" r="0.7"><stop offset="0" stop-color="#8cc486"/><stop offset="1" stop-color="#4f9a4c"/></radialGradient><radialGradient id="gR" cx="0.4" cy="0.35" r="0.7"><stop offset="0" stop-color="#f6a49b"/><stop offset="1" stop-color="#d96a62"/></radialGradient><radialGradient id="gB" cx="0.4" cy="0.35" r="0.7"><stop offset="0" stop-color="#5aa8cc"/><stop offset="1" stop-color="#2a7da6"/></radialGradient></defs>
<rect x="592.5" y="7.5" width="295" height="30" fill="#f5f5f6" stroke="#9b9b9b" stroke-width="1"/>
<rect x="593.5" y="8.5" width="293" height="28" fill="none" stroke="#fbfbfb" stroke-width="1"/>
<rect x="808.5" y="11.5" width="22" height="22" fill="#dddee1" stroke="#a6a8ad" stroke-width="1"/>
<rect x="860.5" y="11.5" width="22" height="22" fill="#dddee1" stroke="#a6a8ad" stroke-width="1"/>
<rect x="600.5" y="14.8" width="14" height="13.6" fill="#f9f9f9" stroke="#bcbcbc" stroke-width="1"/>
<rect x="600" y="14.2" width="15" height="1.6" fill="#a9a9a9"/>
<line x1="610.66" y1="24.62" x2="614.9" y2="28.8" stroke="#8e8e8e" stroke-width="3.2" stroke-linecap="butt"/>
<line x1="611.46" y1="25.42" x2="614.5" y2="28.400000000000002" stroke="#f2f2f2" stroke-width="1.4"/>
<circle cx="607.6" cy="21.6" r="4.3" fill="#eef7fb" stroke="#3f93b8" stroke-width="1.15"/>
<line x1="635.90" y1="23.92" x2="640.9" y2="28.8" stroke="#8e8e8e" stroke-width="3.2" stroke-linecap="butt"/>
<line x1="636.70" y1="24.72" x2="640.5" y2="28.400000000000002" stroke="#f2f2f2" stroke-width="1.4"/>
<circle cx="631.9" cy="20" r="5.6" fill="#eef7fb" stroke="#3f93b8" stroke-width="1.15"/>
<rect x="628.6" y="19" width="6.6" height="2" fill="#0e6c9e"/><rect x="630.9" y="16.7" width="2" height="6.6" fill="#0e6c9e"/>
<line x1="662.00" y1="23.92" x2="667" y2="28.8" stroke="#8e8e8e" stroke-width="3.2" stroke-linecap="butt"/>
<line x1="662.80" y1="24.72" x2="666.6" y2="28.400000000000002" stroke="#f2f2f2" stroke-width="1.4"/>
<circle cx="658" cy="20" r="5.6" fill="#eef7fb" stroke="#3f93b8" stroke-width="1.15"/>
<rect x="654.8" y="19" width="6.4" height="2" fill="#0e6c9e"/>
<rect x="678.5" y="15" width="15.4" height="14.2" fill="url(#gRp)" stroke="#b5b5b5" stroke-width="1"/>
<path d="M679,19.5 C683,17 688,17.5 690.5,21.3 L682.3,28.8 L679,28.8 Z" fill="#ffffff"/>
<rect x="678" y="14.3" width="16.4" height="1.5" fill="#9a9697"/>
<line x1="690.6" y1="21.2" x2="683" y2="28.2" stroke="#0d5f8c" stroke-width="1.5"/>
<path d="M681.3,29 L684.6,26.8 L685.4,29 Z" fill="#0d5f8c"/>
<polygon points="704.4,18.1 707.9,14.3 719.8,14.3 716.6,18.1" fill="url(#gTop)" stroke="#8fcbe6" stroke-width="0.8"/>
<polygon points="716.6,18.1 719.8,14.3 719.8,25.9 716.6,29.4" fill="url(#gSide)" stroke="#6fb3d4" stroke-width="0.6"/>
<rect x="704.4" y="18.1" width="12.200000000000045" height="11.299999999999997" fill="#ffffff" stroke="#7cc2e2" stroke-width="1"/>
<polygon points="722.9,28.9 722.9,31.7 720,31.7" fill="#4a4a4a"/>
<polygon points="731.2,18.1 734.7,14.3 746,14.3 743.3,18.1" fill="url(#gTop)" stroke="#8fcbe6" stroke-width="0.8"/>
<polygon points="743.3,18.1 746,14.3 746,25.2 743.3,28.6" fill="url(#gSide)" stroke="#6fb3d4" stroke-width="0.6"/>
<rect x="731.2" y="18.1" width="12.099999999999909" height="10.5" fill="#ffffff" stroke="#7cc2e2" stroke-width="1"/>
<rect x="739.5" y="21.3" width="7.2" height="8.3" fill="#fbfbfb" stroke="#9a9a9a" stroke-width="1"/>
<rect x="741" y="22.8" width="1" height="1" fill="#777"/><rect x="742.6" y="22.8" width="2.8" height="1" fill="#8a8a8a"/>
<rect x="741" y="24.9" width="1" height="1" fill="#777"/><rect x="742.6" y="24.9" width="2.8" height="1" fill="#8a8a8a"/>
<rect x="741" y="27.0" width="1" height="1" fill="#777"/><rect x="742.6" y="27.0" width="2.8" height="1" fill="#8a8a8a"/>
<polygon points="749.9,28.9 749.9,31.7 747,31.7" fill="#4a4a4a"/>
<rect x="758.5" y="14.8" width="13.2" height="13.6" fill="#ffffff" stroke="#b6b6b6" stroke-width="1"/>
<rect x="758" y="14.2" width="14.2" height="1.4" fill="#ababab"/>
<line x1="758.5" y1="17.2" x2="771.7" y2="17.2" stroke="#c2c2c2" stroke-width="0.9"/>
<line x1="758.5" y1="20.1" x2="771.7" y2="20.1" stroke="#c2c2c2" stroke-width="0.9"/>
<line x1="758.5" y1="23.1" x2="771.7" y2="23.1" stroke="#c2c2c2" stroke-width="0.9"/>
<line x1="758.5" y1="26.3" x2="771.7" y2="26.3" stroke="#c2c2c2" stroke-width="0.9"/>
<line x1="762.3" y1="15" x2="762.3" y2="28.4" stroke="#c2c2c2" stroke-width="0.9"/>
<rect x="758.8" y="26.9" width="4" height="1.4" fill="#cfe8f5"/>
<rect x="763.3" y="23.4" width="10.6" height="6" rx="0.8" fill="#3e3e3e"/>
<rect x="766.6" y="22.1" width="3.4" height="1.8" fill="#3e3e3e"/>
<rect x="763.6" y="24" width="2.6" height="4.6" fill="#8c8c8c"/>
<circle cx="768.7" cy="26.5" r="2.6" fill="#2a2a2a"/><circle cx="768.7" cy="26.5" r="1.7" fill="#9b9b9b"/><circle cx="768.2" cy="26" r="0.7" fill="#d8d8d8"/>
<g stroke="#8a6512" stroke-width="1.35" fill="none"><line x1="784.2" y1="14.3" x2="788.8" y2="18.4"/><line x1="788.8" y1="14.3" x2="784.2" y2="18.4"/><line x1="794.3" y1="14.2" x2="792.6" y2="17.4"/><line x1="791.2" y1="20.5" x2="789.4" y2="23.8"/><line x1="788.2" y1="26.4" x2="786.6" y2="29.6"/></g>
<g stroke="#7a5810" stroke-width="1.3" fill="none"><polyline points="794.7,20.6 794.7,25.7 799.4,25.7"/><line x1="794.7" y1="25.7" x2="791.6" y2="28.4"/></g>
<polygon points="794.7,19.6 796.3,22 793.1,22" fill="#7a5810"/><polygon points="800.2,25.7 797.8,24.1 797.8,27.3" fill="#7a5810"/><polygon points="790.8,29.2 791.3,26.6 793.4,28.7" fill="#7a5810"/>
<polygon points="802.9,28.9 802.9,31.7 800,31.7" fill="#4a4a4a"/>
<rect x="811.5" y="14.8" width="9.2" height="5.6" fill="#fff8e2" stroke="#9c9c9c" stroke-width="1"/>
<g stroke="#333" stroke-width="1.1" fill="none"><line x1="820.8" y1="17.5" x2="827" y2="17.5"/><line x1="825.8" y1="17.5" x2="824.6" y2="21.6"/></g>
<polygon points="822.4,20.6 826.9,22.3 823,23.6" fill="#333"/>
<path d="M817.8,27.5 Q822.4,22.6 827.2,27.5 Q822.4,32.4 817.8,27.5 Z" fill="#2f3d44"/>
<circle cx="822.4" cy="27.5" r="1.55" fill="#ffffff"/><circle cx="822.4" cy="27.5" r="0.6" fill="#2f3d44"/>
<polygon points="837.1,18.4 840.1,15.2 852.8,15.2 849.5,18.2" fill="#ececec" stroke="#c2c2c2" stroke-width="0.8"/>
<polygon points="849.5,18.2 852.8,15.2 852.8,26.5 849.5,29.7" fill="#cbcbcb" stroke="#b9b9b9" stroke-width="0.7"/>
<path d="M837.1,18.4 L849.5,18.2 L849.5,29.6 Q843.5,25 837.1,27.6 Z" fill="#e4e4e4" stroke="#c2c2c2" stroke-width="0.9"/>
<g stroke="#333" stroke-width="1.2"><line x1="871.4" y1="22.3" x2="866.5" y2="17.3"/><line x1="871.4" y1="22.3" x2="876.6" y2="22.3"/><line x1="871.4" y1="22.3" x2="866.5" y2="27.6"/></g>
<circle cx="866.5" cy="17.3" r="2.5" fill="url(#gG)"/><circle cx="876.6" cy="22.4" r="2.5" fill="url(#gR)"/><circle cx="866.5" cy="27.6" r="2.5" fill="url(#gB)"/>
</svg>
<svg width="1481" height="833" style="position:absolute;left:0;top:0;will-change:transform" font-family="Liberation Sans, sans-serif" text-rendering="geometricPrecision" xml:space="preserve">
<text x="1133.82" y="274.0" font-size="16" fill="#7b4c56" textLength="97.13" lengthAdjust="spacingAndGlyphs" >NC_ASM_TOP</text>
<text x="417.43" y="322.0" font-size="16" fill="#7b4c56" textLength="116.90" lengthAdjust="spacingAndGlyphs" >NC_ASM_FRONT</text>
<text x="1062.88" y="512.0" font-size="16" fill="#7b4c56" textLength="28.86" lengthAdjust="spacingAndGlyphs" >TOP</text>
<text x="621.04" y="557.0" font-size="16" fill="#7b4c56" textLength="44.09" lengthAdjust="spacingAndGlyphs" >RIGHT</text>
<text x="711.70" y="746.0" font-size="16" fill="#7b4c56" textLength="114.33" lengthAdjust="spacingAndGlyphs" >NC_ASM_RIGHT</text>
<text x="997.27" y="259.0" font-size="16" fill="#85535e" textLength="33.43" lengthAdjust="spacingAndGlyphs" >A_11</text>
<text x="595.47" y="260.0" font-size="16" fill="#86586a" textLength="34.17" lengthAdjust="spacingAndGlyphs" >A_13</text>
<text x="581.33" y="274.0" font-size="16" fill="#86586a" textLength="48.99" lengthAdjust="spacingAndGlyphs" >FRONT</text>
<text x="787.08" y="522.0" font-size="16" fill="#8d5e6b" textLength="136.55" lengthAdjust="spacingAndGlyphs" >NC_ASM_DEF_CSYS</text>
<text x="787.09" y="522.0" font-size="16" fill="#8d5e6b" textLength="106.46" lengthAdjust="spacingAndGlyphs" >PRT_CSYS_DEF</text>
<text x="742.57" y="430.0" font-size="16" fill="#8d5e6b" textLength="35.96" lengthAdjust="spacingAndGlyphs" >ACS0</text>
<text x="751.29" y="430.0" font-size="16" fill="#8d5e6b" textLength="27.26" lengthAdjust="spacingAndGlyphs" >CS0</text>
<text x="716.89" y="393.0" font-size="15.6" fill="#0a0a0a" textLength="9.81" lengthAdjust="spacingAndGlyphs" >Z</text>
<text x="750.68" y="387.0" font-size="15.6" fill="#0a0a0a" textLength="9.63" lengthAdjust="spacingAndGlyphs" >Y</text>
<text x="774.06" y="415.0" font-size="15.6" fill="#0a0a0a" textLength="10.06" lengthAdjust="spacingAndGlyphs" >X</text>
<text x="761.68" y="485.0" font-size="15.6" fill="#0a0a0a" textLength="10.03" lengthAdjust="spacingAndGlyphs" >Z</text>
<text x="795.88" y="479.0" font-size="15.6" fill="#0a0a0a" textLength="9.63" lengthAdjust="spacingAndGlyphs" >Y</text>
<text x="818.95" y="506.0" font-size="15.6" fill="#0a0a0a" textLength="10.27" lengthAdjust="spacingAndGlyphs" >X</text>
<text x="680.04" y="164.0" font-size="15.2" fill="#2b1058" textLength="78.55" lengthAdjust="spacingAndGlyphs" >= 0.557042</text>
</svg>
<!--CJK-->
</body></html>
